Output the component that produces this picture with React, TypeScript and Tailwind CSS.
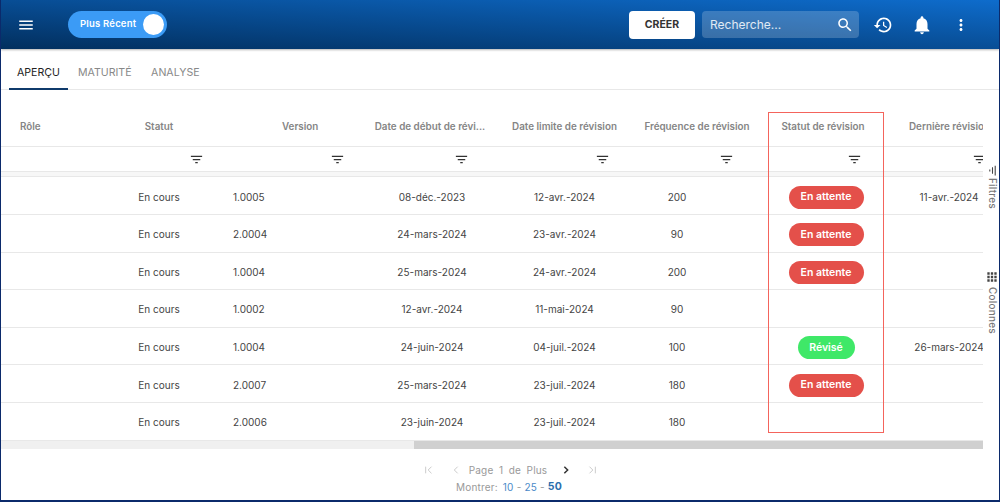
import React from "react";

const Icon = ({ d, className }: { d: string; className?: string }) => (
  <svg viewBox="0 0 24 24" fill="currentColor" className={className}>
    <path d={d} />
  </svg>
);

const filterPath = "M10 18h4v-2h-4v2zM3 6v2h18V6H3zm3 7h12v-2H6v2z";

const columns = [
  { cell: "w-[112px]", head: "pl-[19px] text-left", filter: "", body: "" },
  { cell: "w-[92px]", head: "text-center", filter: "pr-[1px]", body: "text-center" },
  { cell: "w-[148px]", head: "pl-[77px] text-left", filter: "pr-[8px]", body: "pl-[28px] text-left" },
  { cell: "w-[154px]", head: "text-center", filter: "pr-[38px]", body: "pl-[4px] text-center" },
  { cell: "w-[115px]", head: "text-center", filter: "pr-[12px]", body: "text-center" },
  { cell: "w-[150px]", head: "text-center", filter: "pr-[38px]", body: "pr-[40px] text-center" },
  { cell: "w-[108px]", head: "pr-[6px] text-center", filter: "pr-[18px]", body: "text-center" },
  { cell: "w-[120px]", head: "pl-[29px] text-left", filter: "pr-[13px]", body: "pl-[18px] text-center" },
];

const headers = [
  "Rôle",
  "Statut",
  "Version",
  "Date de début de révi...",
  "Date limite de révision",
  "Fréquence de révision",
  "Statut de révision",
  "Dernière révision",
];

const rows = [
  ["En cours", "1.0005", "08-déc.-2023", "12-avr.-2024", "200", "En attente", "11-avr.-2024"],
  ["En cours", "2.0004", "24-mars-2024", "23-avr.-2024", "90", "En attente", ""],
  ["En cours", "1.0004", "25-mars-2024", "24-avr.-2024", "200", "En attente", ""],
  ["En cours", "1.0002", "12-avr.-2024", "11-mai-2024", "90", "", ""],
  ["En cours", "1.0004", "24-juin-2024", "04-juil.-2024", "100", "Révisé", "26-mars-2024"],
  ["En cours", "2.0007", "25-mars-2024", "23-juil.-2024", "180", "En attente", ""],
  ["En cours", "2.0006", "23-juin-2024", "23-juil.-2024", "180", "", ""],
];

const Status = ({ value }: { value: string }) => {
  if (!value) return null;
  return value === "Révisé" ? (
    <span className="inline-flex h-[23px] w-[57px] items-center justify-center rounded-full bg-[#3fe868] text-[10.5px] font-semibold text-white">
      {value}
    </span>
  ) : (
    <span className="inline-flex h-[23px] w-[75px] items-center justify-center rounded-full bg-[#e4504a] text-[10.5px] font-semibold text-white">
      {value}
    </span>
  );
};

export default function App() {
  return (
    <div className="relative flex h-[502px] w-[1000px] flex-col overflow-hidden border-x border-b-2 border-x-[#0b2a6b] border-b-[#0b2a6b] bg-white font-['Inter',sans-serif]">
      {/* Top bar */}
      <header className="flex h-[49px] shrink-0 items-center bg-[linear-gradient(to_top_right,#022f5e,#0e6ccc)] pl-[16px] text-white shadow-[0_1px_2px_rgba(0,0,0,0.3)]">
        <Icon d="M3 18h18v-2H3v2zm0-5h18v-2H3v2zm0-7v2h18V6H3z" className="h-[18px] w-[18px]" />
        <div className="ml-[33px] flex h-[27px] w-[99px] items-center justify-between rounded-full bg-[#3b9bf6] pl-[12px] pr-[3px]">
          <span className="text-[9.5px] font-semibold tracking-[0.2px]">Plus Récent</span>
          <span className="h-[21px] w-[21px] rounded-full bg-white" />
        </div>
        <button className="ml-auto flex h-[28px] w-[66px] items-center justify-center rounded-[4px] bg-white text-[10.5px] font-bold text-[#333]">
          CRÉER
        </button>
        <div className="ml-[7px] flex h-[27px] w-[157px] items-center justify-between rounded-[4px] bg-white/20 pl-[8px] pr-[5px]">
          <span className="text-[12px] text-white/85">Recherche...</span>
          <Icon
            d="M15.5 14h-.79l-.28-.27C15.41 12.59 16 11.11 16 9.5 16 5.91 13.09 3 9.5 3S3 5.91 3 9.5 5.91 16 9.5 16c1.61 0 3.09-.59 4.23-1.57l.27.28v.79l5 4.99L20.49 19l-4.99-5zm-6 0C7.01 14 5 11.99 5 9.5S7.01 5 9.5 5 14 7.01 14 9.5 11.99 14 9.5 14z"
            className="h-[18px] w-[18px]"
          />
        </div>
        <Icon
          d="M13 3c-4.97 0-9 4.03-9 9H1l3.89 3.89.07.14L9 12H6c0-3.87 3.13-7 7-7s7 3.13 7 7-3.13 7-7 7c-1.93 0-3.68-.79-4.94-2.06l-1.42 1.42C8.27 19.99 10.51 21 13 21c4.97 0 9-4.03 9-9s-4.03-9-9-9zm-1 5v5l4.28 2.54.72-1.21-3.5-2.08V8H12z"
          className="ml-[14px] h-[20px] w-[20px]"
        />
        <Icon
          d="M12 22c1.1 0 2-.9 2-2h-4c0 1.1.9 2 2 2zm6-6v-5c0-3.07-1.63-5.64-4.5-6.32V4c0-.83-.67-1.5-1.5-1.5s-1.5.67-1.5 1.5v.68C7.64 5.36 6 7.92 6 11v5l-2 2v1h16v-1l-2-2z"
          className="ml-[18px] h-[22px] w-[22px]"
        />
        <Icon
          d="M12 8c1.1 0 2-.9 2-2s-.9-2-2-2-2 .9-2 2 .9 2 2 2zm0 2c-1.1 0-2 .9-2 2s.9 2 2 2 2-.9 2-2-.9-2-2-2zm0 6c-1.1 0-2 .9-2 2s.9 2 2 2 2-.9 2-2-.9-2-2-2z"
          className="ml-[19px] mr-[29px] h-[18px] w-[18px]"
        />
      </header>

      {/* Tabs */}
      <nav className="flex h-[41px] shrink-0 items-end border-b border-[#e8e8e8] pl-[8px] text-[10.6px]">
        <span className="-mb-px flex h-[32px] w-[59px] items-center justify-center border-b-2 border-[#0f3a6b] text-[#222]">
          APERÇU
        </span>
        <span className="flex h-[32px] items-center pl-[10px] pr-[19.5px] text-[#888]">MATURITÉ</span>
        <span className="flex h-[32px] items-center text-[#888]">ANALYSE</span>
      </nav>

      <div className="flex min-h-0 flex-1">
        {/* Table */}
        <div className="flex w-[982px] shrink-0 flex-col overflow-hidden">
          <div className="flex h-[57px] shrink-0 border-b border-[#e8e8e8] pt-[29px] text-[9.85px] font-semibold text-[#858585]">
            {columns.map((col, i) => (
              <div key={i} className={`${col.cell} ${col.head} shrink-0 whitespace-nowrap`}>
                {headers[i]}
              </div>
            ))}
          </div>
          <div className="flex h-[25px] shrink-0 border-b border-[#e8e8e8]">
            {columns.map((col, i) => (
              <div key={i} className={`${col.cell} ${col.filter} flex shrink-0 items-center justify-end`}>
                {i > 0 && <Icon d={filterPath} className="h-[15px] w-[15px] shrink-0 text-[#333]" />}
              </div>
            ))}
          </div>
          <div className="h-[5.4px] shrink-0 border-b border-[#e8e8e8] bg-[#f7f7f7]" />
          {rows.map((row, r) => (
            <div key={r} className="flex h-[37.6px] shrink-0 items-center border-b border-[#e8e8e8] pt-[3px] text-[10px] text-[#444] last:border-b-0">
              <div className={`${columns[0].cell} shrink-0`} />
              {row.map((value, c) => (
                <div key={c} className={`${columns[c + 1].cell} ${columns[c + 1].body} shrink-0 whitespace-nowrap`}>
                  {c === 5 ? <Status value={value} /> : value}
                </div>
              ))}
            </div>
          ))}
          <div className="mt-auto h-[8px] shrink-0 bg-[#f0f0f0] pl-[413px]">
            <div className="h-full bg-[#d0d0d0]" />
          </div>

          {/* Pagination */}
          <div className="flex h-[52px] shrink-0 flex-col items-center pl-[34px] pt-[13px] text-[10px] tracking-[0.2px] text-[#999]">
            <div className="ml-[3px] flex h-[17px] items-center">
              <svg viewBox="0 0 12 12" fill="none" stroke="#ccc" strokeWidth="1.2" className="h-[10px] w-[10px]">
                <path d="M2 2v8M9 2 5 6l4 4" />
              </svg>
              <svg viewBox="0 0 12 12" fill="none" stroke="#ccc" strokeWidth="1.2" className="ml-[17px] h-[10px] w-[10px]">
                <path d="M8 2 4 6l4 4" />
              </svg>
              <div className="ml-[8px] flex gap-[5.5px]">
                <span>Page</span>
                <span>1</span>
                <span>de</span>
                <span>Plus</span>
              </div>
              <svg viewBox="0 0 12 12" fill="none" stroke="#333" strokeWidth="1.8" className="ml-[14px] h-[10px] w-[10px]">
                <path d="m4 2 4 4-4 4" />
              </svg>
              <svg viewBox="0 0 12 12" fill="none" stroke="#ccc" strokeWidth="1.2" className="ml-[16px] h-[10px] w-[10px]">
                <path d="m3 2 4 4-4 4M10 2v8" />
              </svg>
            </div>
            <div className="mt-[1px] flex h-[15px] items-center gap-[3px] whitespace-nowrap">
              <span className="mr-[2px]">Montrer:</span>
              <span className="text-[#4a8ac8]">10</span>
              <span>-</span>
              <span className="text-[#4a8ac8]">25</span>
              <span>-</span>
              <span className="text-[10.5px] font-bold text-[#2c6fae]">50</span>
            </div>
          </div>
        </div>

        {/* Side tabs */}
        <aside className="flex w-[17px] shrink-0 flex-col items-center pl-[1px] text-[10px] font-medium tracking-[0.2px] text-[#777]">
          <Icon d={filterPath} className="mt-[74px] h-[13px] w-[13px] rotate-90 text-[#444]" />
          <span className="mt-[1px] [writing-mode:vertical-rl]">Filtres</span>
          <Icon
            d="M4 8h4V4H4v4zm6 12h4v-4h-4v4zm-6 0h4v-4H4v4zm0-6h4v-4H4v4zm6 0h4v-4h-4v4zm6-10v4h4V4h-4zm-6 4h4V4h-4v4zm6 6h4v-4h-4v4zm0 6h4v-4h-4v4z"
            className="mt-[61px] h-[14px] w-[14px] text-[#444]"
          />
          <span className="mt-[3px] [writing-mode:vertical-rl]">Colonnes</span>
        </aside>
      </div>

      {/* Highlight box drawn over the table */}
      <div className="pointer-events-none absolute left-[767px] top-[112px] h-[321px] w-[116px] border border-[#f4645c]" />
    </div>
  );
}
